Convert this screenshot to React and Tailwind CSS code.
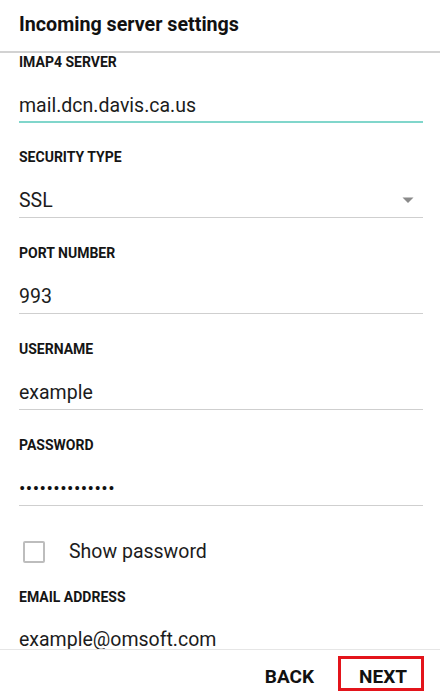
import { useState } from "react"

const FONT = { fontFamily: "Roboto, 'Noto Sans', sans-serif" }

function Field({ label, value, className = "pt-[27px]", focused, select, secret }) {
  return (
    <div className={className}>
      <div className="h-4 text-[14px] leading-4 font-bold text-[#151515]">{label}</div>
      <div
        className={
          "mt-6 flex items-center justify-between " +
          (focused ? "pb-[3px] border-b-2 border-[#80d6cb]" : "pb-1 border-b border-[#cfcfcf]")
        }
      >
        <span
          className={
            secret
              ? "h-6 text-[19px] leading-6 text-[#111] tracking-[0.45px]"
              : "h-6 text-[19.5px] leading-6 text-[#1c1c1c]"
          }
        >
          {value}
        </span>
        {select && (
          <svg width="12" height="7" viewBox="0 0 12 7" className="mr-[9px] mt-[-2px]">
            <path d="M0.5 0.5 L11.5 0.5 L6 6 Z" fill="#8a8a8a" />
          </svg>
        )}
      </div>
    </div>
  )
}

export default function App() {
  const [showPassword, setShowPassword] = useState(false)

  return (
    <div className="w-[440px] h-[697px] bg-white flex flex-col overflow-hidden" style={FONT}>
      <header className="h-[53px] shrink-0 flex items-center px-[19px] border-b-2 border-[#d2d2d2]">
        <h1 className="text-[19.7px] font-bold text-[#111] pb-px">Incoming server settings</h1>
      </header>

      <main className="flex-1 overflow-hidden pl-[19px] pr-[17px]">
        <Field className="pt-px" label="IMAP4 SERVER" value="mail.dcn.davis.ca.us" focused />
        <Field className="pt-[26px]" label="SECURITY TYPE" value="SSL" select />
        <Field label="PORT NUMBER" value="993" />
        <Field label="USERNAME" value="example" />
        <Field label="PASSWORD" value={showPassword ? "example1234567" : "••••••••••••••"} secret={!showPassword} />

        <label className="mt-[34px] flex items-center cursor-pointer">
          <span
            onClick={() => setShowPassword(!showPassword)}
            className="ml-[4px] w-[22px] h-[22px] border-2 border-[#bdbdbd] rounded-[2px]"
          />
          <span className="ml-[24px] text-[19.5px] leading-6 text-[#1c1c1c]">Show password</span>
        </label>

        <div className="pt-[25px]">
          <div className="h-4 text-[14px] leading-4 font-bold text-[#151515]">EMAIL ADDRESS</div>
          <div className="mt-[23px] h-6 text-[19.5px] leading-6 text-[#1c1c1c]">example@omsoft.com</div>
        </div>
      </main>

      <footer className="h-12 shrink-0 border-t border-[#e6e6e6] flex items-start justify-end pr-4 pt-[6px]">
        <button className="mt-[11px] text-[19px] leading-5 font-bold text-[#111]">BACK</button>
        <button className="ml-6 border-[3px] border-[#e3141b] pl-[18px] pr-[14px] pt-2 pb-px text-[19px] leading-5 font-bold text-[#111]">
          NEXT
        </button>
      </footer>
    </div>
  )
}
